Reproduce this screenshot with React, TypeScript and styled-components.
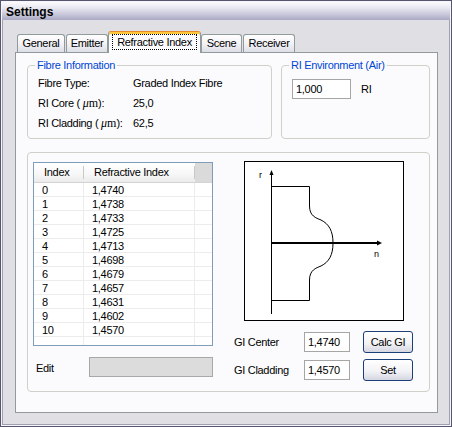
import React from "react";
import styled, { createGlobalStyle } from "styled-components";

const Global = createGlobalStyle`
  html, body { margin: 0; padding: 0; background: #fff; }
  body {
    font-family: "Liberation Sans", Arial, sans-serif;
    font-size: 11px;
    letter-spacing: -0.3px;
    color: #000;
  }
  * { box-sizing: border-box; }
`;

const Window = styled.div`
  width: 452px;
  height: 427px;
  border: 1px solid #55556f;
  background: #f6f6f9;
  padding: 1px;
  display: flex;
  flex-direction: column;
`;

const TitleBar = styled.div`
  height: 18px;
  flex: none;
  display: flex;
  align-items: center;
  padding: 1px 0 0 4px;
  background: linear-gradient(to bottom, #fbfbfe 0%, #e6e6f0 35%, #c2c2d6 75%, #a9a9c4 100%);
  font-size: 12px;
  font-weight: bold;
  letter-spacing: 0;
`;

const Body = styled.div`
  flex: 1;
  display: flex;
  flex-direction: column;
  background: #dfdfe4;
  border: 1px solid #a0a0b0;
  border-top: none;
  padding: 11px 11px 11px 12px;
  min-height: 0;
`;

const TabStrip = styled.div`
  height: 21px;
  flex: none;
  display: flex;
  align-items: flex-end;
  gap: 1px;
  padding-left: 2px;
`;

const Tab = styled.div<{ $w: number; $active?: boolean }>`
  position: relative;
  width: ${(p) => p.$w}px;
  height: ${(p) => (p.$active ? 22 : 18)}px;
  margin: ${(p) => (p.$active ? "0 -1px -1px" : "0")};
  z-index: ${(p) => (p.$active ? 2 : 0)};
  border: 1px solid #919b9c;
  border-bottom: none;
  border-radius: 3px 3px 0 0;
  ${(p) =>
    p.$active
      ? `border-top: 1px solid #e68b2c; box-shadow: inset 0 2px 0 #ffc83c; background: #fcfcfe;`
      : `background: linear-gradient(to bottom, #ffffff 0%, #f4f4f8 45%, #dedee8 100%);`}
  display: flex;
  justify-content: center;
  align-items: flex-start;
  line-height: 16px;
  white-space: nowrap;
`;

const FocusLabel = styled.span`
  display: block;
  margin-top: 2px;
  width: calc(100% - 6px);
  height: 16px;
  line-height: 14px;
  text-align: center;
  border: 1px dotted #000;
`;

const Panel = styled.div`
  flex: 1;
  background: #fbfbfd;
  border: 1px solid #919b9c;
  padding: 6px 7px 0 11px;
  display: flex;
  flex-direction: column;
`;

const TopRow = styled.div`
  display: flex;
  gap: 9px;
`;

const Group = styled.fieldset<{ $w?: number }>`
  margin: 0;
  min-width: 0;
  ${(p) => (p.$w ? `width: ${p.$w}px; flex: none;` : `flex: 1;`)}
  border: 1px solid #d0d0c8;
  border-radius: 4px;
  padding: 0 6px 5px 10px;
`;

const Legend = styled.legend`
  color: #0046d5;
  padding: 0 2px;
  margin-left: -3px;
  line-height: 13px;
`;

const InfoGrid = styled.div`
  display: grid;
  grid-template-columns: 95px auto;
  grid-auto-rows: 20px;
  align-items: center;
  padding-top: 1px;
`;

const Mu = styled.span`
  font-family: "Liberation Serif", "Times New Roman", serif;
  font-size: 12px;
  letter-spacing: 0;
  i { font-style: italic; }
`;

const EnvRow = styled.div`
  display: flex;
  align-items: center;
  margin-top: 7px;
  gap: 10px;
`;

const TextBox = styled.div<{ $w: number }>`
  width: ${(p) => p.$w}px;
  height: 20px;
  border: 1px solid #a5a5a5;
  background: #fff;
  padding-left: 3px;
  line-height: 18px;
`;

const Frame = styled.div`
  margin-top: 13px;
  border: 1px solid #d0d0c8;
  border-radius: 4px;
  padding: 9px 15px 10px 5px;
  display: grid;
  grid-template-columns: 180px 179px;
  column-gap: 21px;
`;

const Column = styled.div`
  display: flex;
  flex-direction: column;
`;

const ListView = styled.div`
  height: 184px;
  border: 1px solid #7f9db9;
  background: #fff;
  display: flex;
  flex-direction: column;
  overflow: hidden;
`;

const Cols = `
  display: grid;
  grid-template-columns: 50px 111px 1fr;
`;

const HeaderRow = styled.div`
  ${Cols}
  height: 20px;
  flex: none;
  border-bottom: 1px solid #d3d3d3;
`;

const HeaderCell = styled.div<{ $filler?: boolean }>`
  position: relative;
  padding-left: 10px;
  line-height: 19px;
  background: ${(p) =>
    p.$filler ? "#dadada" : "linear-gradient(to bottom, #ffffff 0%, #f7f7f7 60%, #ebebeb 100%)"};
  &::after {
    content: "";
    display: ${(p) => (p.$filler ? "none" : "block")};
    position: absolute;
    right: 0;
    top: 3px;
    bottom: 3px;
    width: 1px;
    background: #c8c8c8;
  }
`;

const Row = styled.div<{ $fill?: boolean }>`
  ${Cols}
  height: ${(p) => (p.$fill ? "auto" : "14px")};
  flex: ${(p) => (p.$fill ? 1 : "none")};
  border-bottom: ${(p) => (p.$fill ? "none" : "1px solid #ececec")};
`;

const Cell = styled.div<{ $last?: boolean }>`
  padding-left: 8px;
  line-height: 15px;
  white-space: nowrap;
  border-right: ${(p) => (p.$last ? "none" : "1px solid #ececec")};
`;

const EditRow = styled.div`
  margin-top: 11px;
  height: 20px;
  display: flex;
  align-items: center;
`;

const EditLabel = styled.span`
  width: 56px;
  padding: 2px 0 0 3px;
`;

const DisabledBox = styled.div`
  flex: 1;
  height: 20px;
  background: #dcdcdc;
  border: 1px solid #a8a8a8;
`;

const Diagram = styled.svg`
  display: block;
  align-self: center;
  margin-top: -1px;
`;

const GIGrid = styled.div`
  margin-top: 10px;
  display: grid;
  grid-template-columns: 70px 46px 1fr;
  grid-auto-rows: 22px;
  row-gap: 6px;
  align-items: center;
`;

const Button = styled.button`
  justify-self: end;
  width: 50px;
  height: 22px;
  padding: 0;
  border: 1px solid #1c3f78;
  border-radius: 3px;
  background: linear-gradient(to bottom, #ffffff 0%, #f3f3f7 55%, #d6d6e2 100%);
  font-family: inherit;
  font-size: 11px;
  letter-spacing: -0.3px;
  color: #000;
`;

const data = [
  "1,4740", "1,4738", "1,4733", "1,4725", "1,4713", "1,4698",
  "1,4679", "1,4657", "1,4631", "1,4602", "1,4570",
];

const tabs: { label: string; w: number; active?: boolean }[] = [
  { label: "General", w: 48 },
  { label: "Emitter", w: 42 },
  { label: "Refractive Index", w: 93, active: true },
  { label: "Scene", w: 41 },
  { label: "Receiver", w: 52 },
];

export default function App() {
  return (
    <>
      <Global />
      <Window>
        <TitleBar>Settings</TitleBar>
        <Body>
          <TabStrip>
            {tabs.map((t) => (
              <Tab key={t.label} $w={t.w} $active={t.active}>
                {t.active ? <FocusLabel>{t.label}</FocusLabel> : t.label}
              </Tab>
            ))}
          </TabStrip>
          <Panel>
            <TopRow>
              <Group $w={245}>
                <Legend>Fibre Information</Legend>
                <InfoGrid>
                  <span>Fibre Type:</span>
                  <span>Graded Index Fibre</span>
                  <span>
                    RI Core ( <Mu><i>μ</i>m</Mu>):
                  </span>
                  <span>25,0</span>
                  <span>
                    RI Cladding ( <Mu><i>μ</i>m</Mu>):
                  </span>
                  <span>62,5</span>
                </InfoGrid>
              </Group>
              <Group>
                <Legend>RI Environment (Air)</Legend>
                <EnvRow>
                  <TextBox $w={59}>1,000</TextBox>
                  <span>RI</span>
                </EnvRow>
              </Group>
            </TopRow>
            <Frame>
              <Column>
                <ListView>
                  <HeaderRow>
                    <HeaderCell>Index</HeaderCell>
                    <HeaderCell>Refractive Index</HeaderCell>
                    <HeaderCell $filler />
                  </HeaderRow>
                  {data.map((v, i) => (
                    <Row key={i}>
                      <Cell>{i}</Cell>
                      <Cell>{v}</Cell>
                      <Cell $last />
                    </Row>
                  ))}
                  <Row $fill>
                    <Cell />
                    <Cell />
                    <Cell $last />
                  </Row>
                </ListView>
                <EditRow>
                  <EditLabel>Edit</EditLabel>
                  <DisabledBox />
                </EditRow>
              </Column>
              <Column>
                <Diagram width="160" height="160" viewBox="0 0 160 160">
                  <rect x="0.5" y="0.5" width="159" height="159" fill="#fff" stroke="#000" />
                  <line x1="27.5" y1="13" x2="27.5" y2="153" stroke="#000" />
                  <polygon points="27.5,9 25.5,14 29.5,14" fill="#000" />
                  <line x1="27" y1="82" x2="134" y2="82" stroke="#000" strokeWidth="2" />
                  <polygon points="138,82 133,79.5 133,84.5" fill="#000" />
                  <path
                    d="M27.5,25.5 H65.5 V45 C65.5,55 72,57 77,59 C85,63 89,70 89,82 C89,94 85,101 77,105 C72,107 65.5,109 65.5,119 V139.5 H27.5"
                    fill="none"
                    stroke="#000"
                  />
                  <text x="15" y="17" fontSize="9" fontFamily="Liberation Sans, Arial, sans-serif">r</text>
                  <text x="130" y="96" fontSize="9" fontFamily="Liberation Sans, Arial, sans-serif">n</text>
                </Diagram>
                <GIGrid>
                  <span>GI Center</span>
                  <TextBox $w={46}>1,4740</TextBox>
                  <Button>Calc GI</Button>
                  <span>GI Cladding</span>
                  <TextBox $w={46}>1,4570</TextBox>
                  <Button>Set</Button>
                </GIGrid>
              </Column>
            </Frame>
          </Panel>
        </Body>
      </Window>
    </>
  );
}
